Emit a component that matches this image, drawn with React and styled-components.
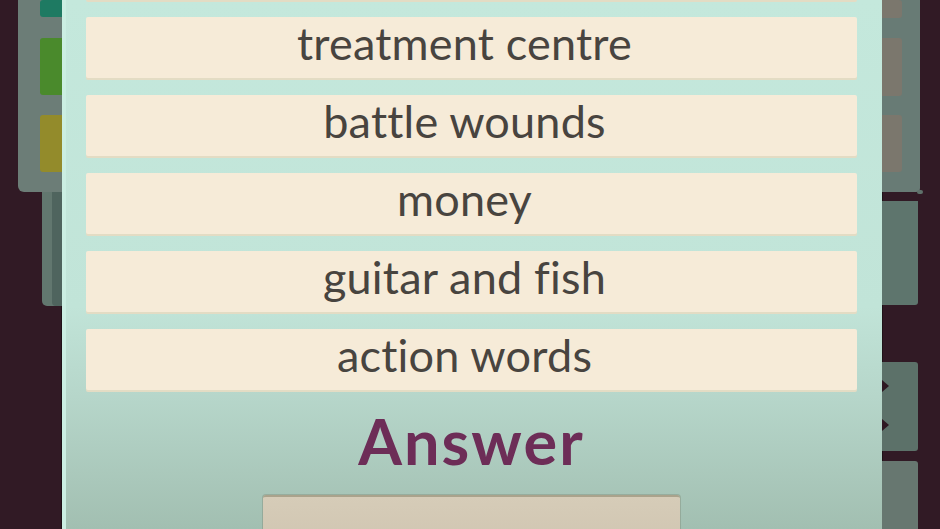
import React from "react";
import styled, { createGlobalStyle } from "styled-components";

const Global = createGlobalStyle`
  html, body { margin: 0; padding: 0; background: #311a25; }
  body { font-family: "Lato", "Noto Sans", sans-serif; }
  #root { width: 940px; height: 529px; overflow: hidden; }
`;

const Screen = styled.div`
  width: 940px;
  height: 529px;
  display: flex;
  background: #311a25;
  overflow: hidden;
`;

const LeftRail = styled.div`
  width: 62px;
  flex: none;
  display: flex;
  flex-direction: column;
  align-items: flex-end;
`;

const RightRail = styled.div`
  flex: 1;
  display: flex;
  flex-direction: column;
  align-items: flex-start;
`;

const SideCard = styled.div`
  width: ${(p) => p.$w}px;
  height: ${(p) => p.$h}px;
  flex: none;
  margin-top: ${(p) => p.$mt || 0}px;
  background: ${(p) => p.$bg};
  border-radius: ${(p) => p.$radius || "0"};
  display: flex;
  flex-direction: column;
  align-items: ${(p) => (p.$side === "left" ? "flex-end" : "flex-start")};
  position: relative;
  box-sizing: border-box;
`;

const SideStripe = styled.div`
  width: ${(p) => p.$w}px;
  height: 100%;
  background: ${(p) => p.$bg};
  border-radius: 0 0 0 4px;
`;

const Tile = styled.div`
  width: ${(p) => p.$w}px;
  height: ${(p) => p.$h}px;
  margin-top: ${(p) => p.$mt}px;
  background: ${(p) => p.$bg};
  border-radius: ${(p) => (p.$side === "left" ? "3px 0 0 3px" : "0 3px 3px 0")};
  flex: none;
`;

const Notch = styled.div`
  position: absolute;
  left: 0;
  top: ${(p) => p.$top}px;
  width: 0;
  height: 0;
  border-top: 6px solid transparent;
  border-bottom: 6px solid transparent;
  border-left: 7px solid #2e1822;
`;

const Lip = styled.div`
  position: absolute;
  right: -3px;
  bottom: -2px;
  width: 6px;
  height: 4px;
  background: #5f716b;
  border-radius: 2px;
`;

const Panel = styled.div`
  width: 820px;
  flex: none;
  height: 529px;
  box-sizing: border-box;
  padding: 0 25px 0 24px;
  background: linear-gradient(180deg, #c4e8dc 0%, #c1e4d8 58%, #b6d6ca 75%, #a2bfb1 100%);
  box-shadow: -1px 0 0 #1f1218, 1px 0 0 #1f1218, inset 4px 0 0 #cbeee2;
  display: flex;
  flex-direction: column;
  align-items: center;
`;

const List = styled.div`
  align-self: stretch;
  display: flex;
  flex-direction: column;
  gap: 17px;
  margin-top: -61px;
`;

const Choice = styled.div`
  height: 61px;
  box-sizing: border-box;
  background: #f6ebd8;
  box-shadow: 0 2px 0 #e3dcc4;
  border-radius: 2px;
  display: flex;
  align-items: center;
  justify-content: center;
  color: #48443f;
  font-size: 45px;
  line-height: 1;
  letter-spacing: 0.2px;
  padding: 0 14px 9px 0;
  white-space: nowrap;
`;

const Heading = styled.div`
  margin-top: 19px;
  color: #6d2d57;
  font-weight: 700;
  font-size: 63px;
  line-height: 1;
  letter-spacing: 2.1px;
`;

const AnswerBox = styled.div`
  margin-top: 23px;
  width: 417px;
  height: 60px;
  flex: none;
  box-sizing: border-box;
  background: linear-gradient(180deg, #d6ccb8 0%, #cfc4b0 100%);
  border-top: 2px solid #aaa38c;
  border-radius: 3px;
  box-shadow: 0 0 0 1px rgba(120, 130, 110, 0.35);
`;

const choices = [
  "",
  "treatment centre",
  "battle wounds",
  "money",
  "guitar and fish",
  "action words",
];

export default function App() {
  return (
    <>
      <Global />
      <Screen>
        <LeftRail>
          <SideCard $w={44} $h={192} $bg="#6c7d77" $radius="0 0 0 6px" $side="left">
            <Tile $side="left" $w={22} $h={17} $mt={0} $bg="#1e7a62" />
            <Tile $side="left" $w={22} $h={57} $mt={21} $bg="#4a8a2c" />
            <Tile $side="left" $w={22} $h={57} $mt={20} $bg="#938b2b" />
          </SideCard>
          <SideCard $w={20} $h={114} $bg="#62776f" $radius="0 0 0 5px" $side="left">
            <SideStripe $w={10} $bg="#4f645e" />
          </SideCard>
        </LeftRail>
        <Panel>
          <List>
            {choices.map((c, i) => (
              <Choice key={i}>{c}</Choice>
            ))}
          </List>
          <Heading>Answer</Heading>
          <AnswerBox />
        </Panel>
        <RightRail>
          <SideCard $w={38} $h={192} $bg="#687b75" $radius="0 0 4px 0" $side="right">
            <Tile $side="right" $w={20} $h={18} $mt={0} $bg="#7b776d" />
            <Tile $side="right" $w={20} $h={58} $mt={20} $bg="#7b776d" />
            <Tile $side="right" $w={20} $h={57} $mt={19} $bg="#7b776d" />
            <Lip />
          </SideCard>
          <SideCard $w={36} $h={104} $mt={9} $bg="#5e756d" $radius="0 0 3px 0" $side="right" />
          <SideCard $w={36} $h={89} $mt={57} $bg="#5c7169" $radius="0 3px 3px 0" $side="right">
            <Notch $top={18} />
            <Notch $top={57} />
          </SideCard>
          <SideCard $w={36} $h={80} $mt={10} $bg="#677770" $radius="0 3px 0 0" $side="right" />
        </RightRail>
      </Screen>
    </>
  );
}
